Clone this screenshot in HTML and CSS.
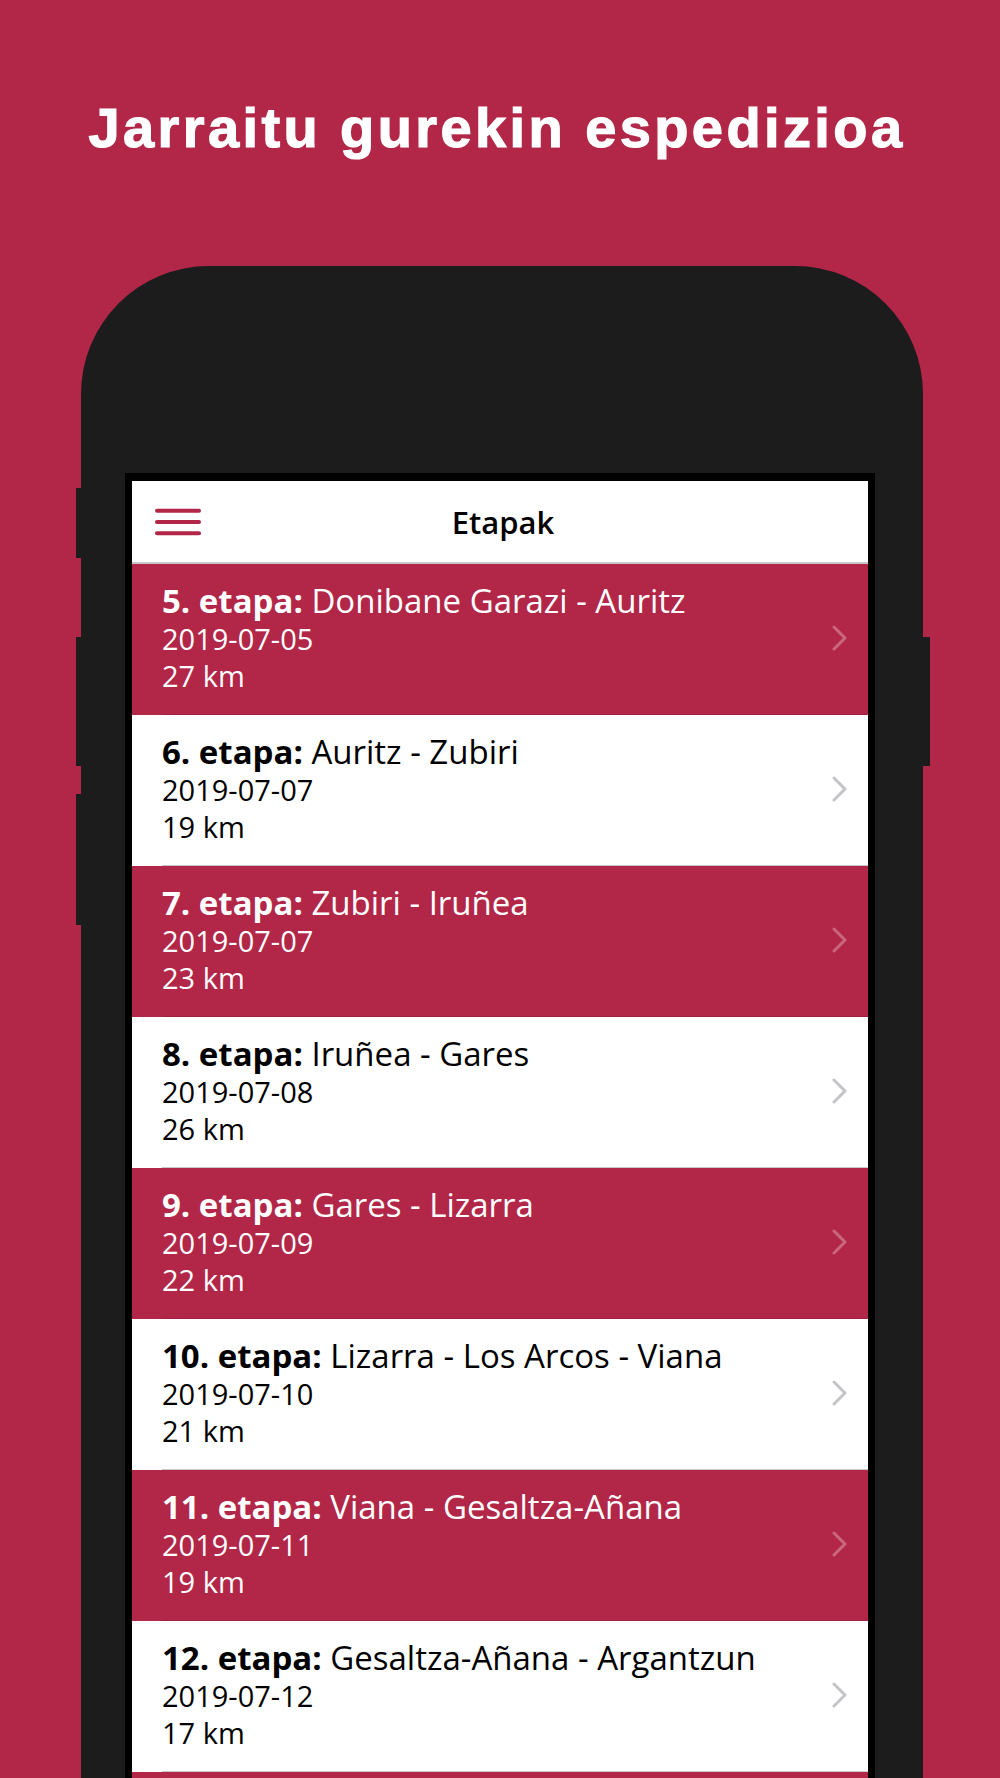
FILE: index.html
```html
<!DOCTYPE html>
<html lang="eu">
<head>
<meta charset="utf-8">
<title>Jarraitu gurekin espedizioa</title>
<link rel="stylesheet" href="styles.css">
</head>
<body>
<h1 class="headline">Jarraitu gurekin espedizioa</h1>
<div class="phone">
  <span class="side-btn btn-l1"></span>
  <span class="side-btn btn-l2"></span>
  <span class="side-btn btn-l3"></span>
  <span class="side-btn btn-r1"></span>
  <div class="screen">
    <header class="navbar">
      <span class="menu">
        <svg viewBox="0 0 46 30" width="46" height="30" aria-hidden="true">
          <line x1="2" y1="3.7" x2="44" y2="3.7"/>
          <line x1="2" y1="15" x2="44" y2="15"/>
          <line x1="2" y1="26.3" x2="44" y2="26.3"/>
        </svg>
      </span>
      <h2 class="nav-title">Etapak</h2>
      <span class="nav-spacer"></span>
    </header>
    <ul class="stages">
      <li class="stage stage-red">
        <div class="stage-body">
          <div class="stage-text">
            <p class="stage-title"><b>5. etapa:</b> Donibane Garazi - Auritz</p>
            <p class="stage-meta">2019-07-05</p>
            <p class="stage-meta">27 km</p>
          </div>
          <svg class="chev" viewBox="0 0 15 26" width="15" height="26"><polyline points="2,2 13,13 2,24"/></svg>
        </div>
        <div class="sep"></div>
      </li>
      <li class="stage stage-white">
        <div class="stage-body">
          <div class="stage-text">
            <p class="stage-title"><b>6. etapa:</b> Auritz - Zubiri</p>
            <p class="stage-meta">2019-07-07</p>
            <p class="stage-meta">19 km</p>
          </div>
          <svg class="chev" viewBox="0 0 15 26" width="15" height="26"><polyline points="2,2 13,13 2,24"/></svg>
        </div>
        <div class="sep"></div>
      </li>
      <li class="stage stage-red">
        <div class="stage-body">
          <div class="stage-text">
            <p class="stage-title"><b>7. etapa:</b> Zubiri - Iruñea</p>
            <p class="stage-meta">2019-07-07</p>
            <p class="stage-meta">23 km</p>
          </div>
          <svg class="chev" viewBox="0 0 15 26" width="15" height="26"><polyline points="2,2 13,13 2,24"/></svg>
        </div>
        <div class="sep"></div>
      </li>
      <li class="stage stage-white">
        <div class="stage-body">
          <div class="stage-text">
            <p class="stage-title"><b>8. etapa:</b> Iruñea - Gares</p>
            <p class="stage-meta">2019-07-08</p>
            <p class="stage-meta">26 km</p>
          </div>
          <svg class="chev" viewBox="0 0 15 26" width="15" height="26"><polyline points="2,2 13,13 2,24"/></svg>
        </div>
        <div class="sep"></div>
      </li>
      <li class="stage stage-red">
        <div class="stage-body">
          <div class="stage-text">
            <p class="stage-title"><b>9. etapa:</b> Gares - Lizarra</p>
            <p class="stage-meta">2019-07-09</p>
            <p class="stage-meta">22 km</p>
          </div>
          <svg class="chev" viewBox="0 0 15 26" width="15" height="26"><polyline points="2,2 13,13 2,24"/></svg>
        </div>
        <div class="sep"></div>
      </li>
      <li class="stage stage-white">
        <div class="stage-body">
          <div class="stage-text">
            <p class="stage-title"><b>10. etapa:</b> Lizarra - Los Arcos - Viana</p>
            <p class="stage-meta">2019-07-10</p>
            <p class="stage-meta">21 km</p>
          </div>
          <svg class="chev" viewBox="0 0 15 26" width="15" height="26"><polyline points="2,2 13,13 2,24"/></svg>
        </div>
        <div class="sep"></div>
      </li>
      <li class="stage stage-red">
        <div class="stage-body">
          <div class="stage-text">
            <p class="stage-title"><b>11. etapa:</b> Viana - Gesaltza-Añana</p>
            <p class="stage-meta">2019-07-11</p>
            <p class="stage-meta">19 km</p>
          </div>
          <svg class="chev" viewBox="0 0 15 26" width="15" height="26"><polyline points="2,2 13,13 2,24"/></svg>
        </div>
        <div class="sep"></div>
      </li>
      <li class="stage stage-white">
        <div class="stage-body">
          <div class="stage-text">
            <p class="stage-title"><b>12. etapa:</b> Gesaltza-Añana - Argantzun</p>
            <p class="stage-meta">2019-07-12</p>
            <p class="stage-meta">17 km</p>
          </div>
          <svg class="chev" viewBox="0 0 15 26" width="15" height="26"><polyline points="2,2 13,13 2,24"/></svg>
        </div>
        <div class="sep"></div>
      </li>
      <li class="stage stage-red" aria-hidden="true">
        <div class="stage-body"></div>
      </li>
    </ul>
  </div>
</div>
</body>
</html>
```
FILE: styles.css
```css
html, body {
  margin: 0;
  padding: 0;
  height: 1778px;
  overflow: hidden;
  background: #b22648;
}

.headline {
  margin: 96px 0 0;
  padding-right: 6px;
  font: 700 56px/64px "Liberation Sans", Arial, sans-serif;
  letter-spacing: 3.4px;
  -webkit-text-stroke: 1.2px #ffffff;
  color: #ffffff;
  text-align: center;
}

.phone {
  position: relative;
  box-sizing: border-box;
  margin: 106px 0 0 81px;
  width: 842px;
  height: 1700px;
  padding-top: 207px;
  background: #1c1c1c;
  border-radius: 128px 128px 0 0;
}

.side-btn {
  position: absolute;
  background: #1c1c1c;
}
.btn-l1 { left: -5px; width: 5px; top: 222px; height: 70px; }
.btn-l2 { left: -5px; width: 5px; top: 371px; height: 129px; }
.btn-l3 { left: -5px; width: 5px; top: 528px; height: 131px; }
.btn-r1 { right: -7px; width: 7px; top: 371px; height: 129px; }

.screen {
  box-sizing: border-box;
  margin-left: 44px;
  width: 750px;
  border: solid #000000;
  border-width: 8px 7px 0;
  background: #ffffff;
  font-family: "Open Sans", "Noto Sans", sans-serif;
}

.navbar {
  display: grid;
  grid-template-columns: 1fr auto 1fr;
  align-items: center;
  height: 81px;
  border-bottom: 2px solid #c9c9cc;
  background: #ffffff;
}

.menu {
  display: flex;
  margin-left: 23px;
}
.menu svg line {
  stroke: #b22648;
  stroke-width: 4;
  stroke-linecap: round;
}

.nav-title {
  margin: 0;
  padding-left: 6px;
  font-weight: 600;
  font-size: 31px;
  line-height: 40px;
  color: #000000;
}

.stages {
  list-style: none;
  margin: 0;
  padding: 0;
}

.stage-body {
  display: flex;
  align-items: center;
  height: 150px;
}

.stage-text {
  flex: 1;
  align-self: flex-start;
  padding: 18px 0 0 30px;
}

.stage-text p {
  margin: 0;
  white-space: nowrap;
}

.stage-title {
  font-size: 33px;
  line-height: 38px;
  font-weight: 400;
}
.stage-title b {
  display: inline-block;
  font-weight: 700;
}

.stage-meta {
  font-size: 29px;
  line-height: 37px;
  font-weight: 400;
}

.chev {
  margin-right: 21px;
  margin-top: -3px;
  fill: none;
  stroke-width: 3;
  stroke-linecap: round;
  stroke-linejoin: round;
}

.sep {
  height: 1px;
  margin-left: 30px;
}

.stage-red {
  background: #b22648;
  color: #ffffff;
}
.stage-red .chev { stroke: rgba(255, 255, 255, 0.3); }
.stage-red .sep { background: #a11f40; }

.stage-white {
  background: #ffffff;
  color: #000000;
}
.stage-white .chev { stroke: #c4c4c8; }
.stage-white .sep { background: #c8c7cc; }
```
